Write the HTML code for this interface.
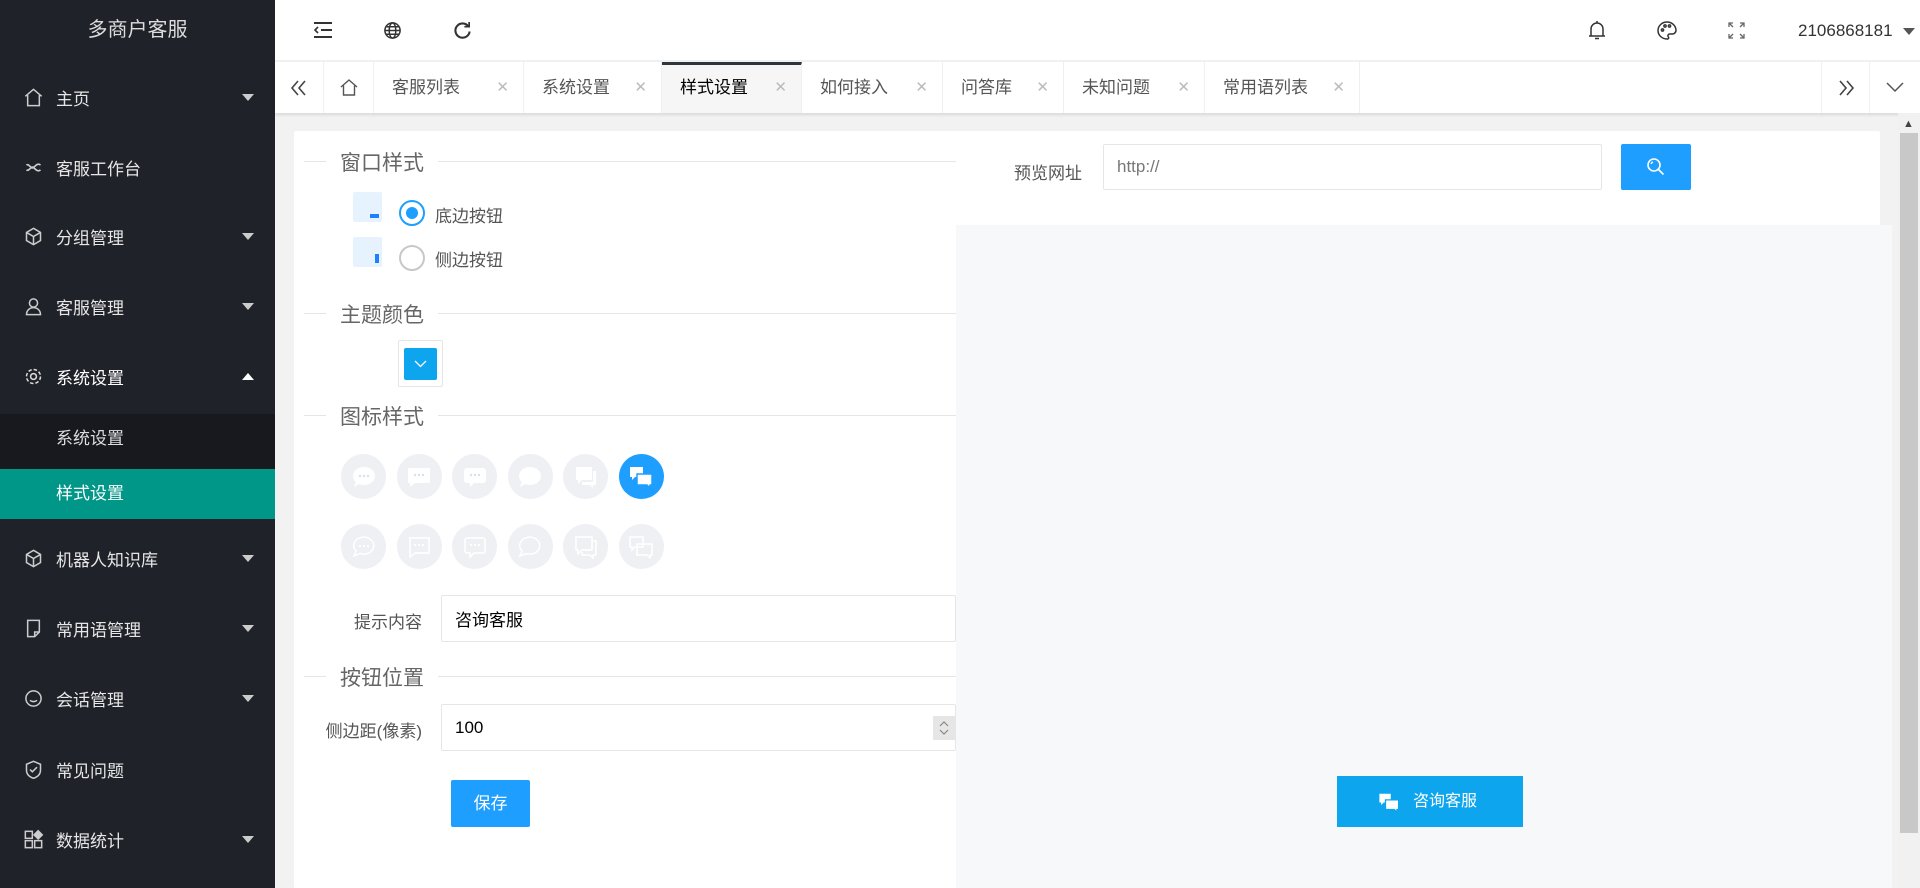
<!DOCTYPE html>
<html><head><meta charset="utf-8">
<style>
*{margin:0;padding:0;box-sizing:border-box}
body{width:1920px;height:888px;overflow:hidden;background:#f2f2f2;font-family:"Liberation Sans","Noto Sans CJK SC",sans-serif;position:relative}
.abs{position:absolute}
#side{left:0;top:0;width:275px;height:888px;background:#20222a}
.logo{left:0;top:0;width:275px;height:61px;line-height:61px;text-align:center;color:#ddd;font-size:20px}
.mi{left:0;width:275px;height:70px;color:#e6e6e6;font-size:17px;display:flex;align-items:center}
.mi svg{position:absolute;left:23px}
.mi span{position:absolute;left:56px}
.mi .ar{position:absolute;left:242px;width:0;height:0;border-left:6px solid transparent;border-right:6px solid transparent;border-top:7px solid #ccc}
.mi .up{border-top:none;border-bottom:7px solid #fff}
.sub{left:0;width:275px;height:50px;line-height:50px;padding-left:56px;color:#ddd;font-size:17px}
#hdr{left:275px;top:0;width:1645px;height:61px;background:#fff;border-bottom:1px solid #f0f0f0}
#tabs{left:275px;top:62px;width:1645px;height:51px;background:#fff;box-shadow:0 2px 3px rgba(0,0,0,.1)}
.tab{top:0;height:51px;border-right:1px solid #f0f0f0;font-size:17px;color:#555;line-height:51px;padding-left:18px}
.tab i{position:absolute;right:14px;top:0;font-style:normal;color:#bbb;font-size:15px}
.leg{font-size:21px;color:#666;background:#fff;padding:0 14px 0 14px}
.line{height:1px;background:#e6e6e6}
.ic{width:45px;height:45px;border-radius:50%;background:#eef0f4;display:flex;align-items:center;justify-content:center}
.inp{border:1px solid #e6e6e6;background:#fff;border-radius:2px;font-size:17px;color:#000;padding-left:13px;display:flex;align-items:center}
</style></head><body>
<div id="side" class="abs">
<div class="logo abs">多商户客服</div>
<div class="mi abs" style="top:62px"><svg width="21" height="21" viewBox="0 0 18 18" fill="none" stroke="#ccc" stroke-width="1.3"><path d="M2 8L9 2l7 6M4 7v9h10V7"/></svg><span>主页</span><b class="ar"></b></div>
<div class="mi abs" style="top:132px"><svg width="21" height="21" viewBox="0 0 18 18" fill="none" stroke="#ccc" stroke-width="1.4"><path d="M3 7c2-2 4 4 6 2s4-4 6-2M3 11c2 2 4-4 6-2s4 4 6 2"/></svg><span>客服工作台</span></div>
<div class="mi abs" style="top:201px"><svg width="21" height="21" viewBox="0 0 18 18" fill="none" stroke="#ccc" stroke-width="1.3"><path d="M9 2l6 3.5v7L9 16l-6-3.5v-7zM3 5.5L9 9l6-3.5M9 9v7"/></svg><span>分组管理</span><b class="ar"></b></div>
<div class="mi abs" style="top:271px"><svg width="21" height="21" viewBox="0 0 18 18" fill="none" stroke="#ccc" stroke-width="1.3"><circle cx="9" cy="6" r="3.5"/><path d="M3 16c0-4 3-6 6-6s6 2 6 6z"/></svg><span>客服管理</span><b class="ar"></b></div>
<div class="mi abs" style="top:341px;color:#fff"><svg width="21" height="21" viewBox="0 0 18 18" fill="none" stroke="#ddd" stroke-width="1.3"><circle cx="9" cy="9" r="2.5"/><circle cx="9" cy="9" r="6" stroke-dasharray="3 1.7"/></svg><span>系统设置</span><b class="ar up"></b></div>
<div class="abs" style="left:0;top:414px;width:275px;height:105px;background:#18191e"></div>
<div class="sub abs" style="top:414px">系统设置</div>
<div class="sub abs" style="top:469px;background:#009688;color:#fff">样式设置</div>
<div class="mi abs" style="top:523px"><svg width="21" height="21" viewBox="0 0 18 18" fill="none" stroke="#ccc" stroke-width="1.3"><path d="M9 2l6 3.5v7L9 16l-6-3.5v-7zM3 5.5L9 9l6-3.5M9 9v7"/></svg><span>机器人知识库</span><b class="ar"></b></div>
<div class="mi abs" style="top:593px"><svg width="21" height="21" viewBox="0 0 18 18" fill="none" stroke="#ccc" stroke-width="1.3"><path d="M4 2h10v10l-4 4H4zM10 16v-4h4"/></svg><span>常用语管理</span><b class="ar"></b></div>
<div class="mi abs" style="top:663px"><svg width="21" height="21" viewBox="0 0 18 18" fill="none" stroke="#ccc" stroke-width="1.3"><circle cx="9" cy="9" r="6.5"/><path d="M6 10.5c1.5 1.5 4.5 1.5 6 0"/></svg><span>会话管理</span><b class="ar"></b></div>
<div class="mi abs" style="top:734px"><svg width="21" height="21" viewBox="0 0 18 18" fill="none" stroke="#ccc" stroke-width="1.3"><path d="M9 2l6 2.5v5c0 4-3 6-6 7-3-1-6-3-6-7v-5zM6 9l2 2 4-4"/></svg><span>常见问题</span></div>
<div class="mi abs" style="top:804px"><svg width="21" height="21" viewBox="0 0 18 18" fill="none" stroke="#ccc" stroke-width="1.3"><rect x="2" y="2" width="6" height="6"/><rect x="2" y="10" width="6" height="6"/><rect x="10" y="10" width="6" height="6"/><path d="M13 1.5l3.5 3.5-3.5 3.5-3.5-3.5z" fill="#ccc"/></svg><span>数据统计</span><b class="ar"></b></div>
</div>

<div id="hdr" class="abs">
<svg class="abs" style="left:38px;top:21px" width="20" height="18" viewBox="0 0 20 18" fill="none" stroke="#333" stroke-width="2"><path d="M1 2h18M8 9h11M1 16h18"/><path d="M5 6l-3 3 3 3" stroke-width="1.6"/></svg>
<svg class="abs" style="left:108px;top:21px" width="19" height="19" viewBox="0 0 20 20" fill="none" stroke="#333" stroke-width="1.6"><circle cx="10" cy="10" r="8"/><ellipse cx="10" cy="10" rx="3.5" ry="8"/><path d="M2 10h16M3.5 6h13M3.5 14h13"/></svg>
<svg class="abs" style="left:178px;top:21px" width="19" height="19" viewBox="0 0 20 20" fill="none" stroke="#333" stroke-width="2.2"><path d="M16 5.5A7.5 7.5 0 1 0 17.5 11"/><path d="M17 1v5h-5" stroke-width="1.8"/></svg>
<svg class="abs" style="left:1313px;top:20px" width="18" height="21" viewBox="0 0 18 21" fill="none" stroke="#333" stroke-width="1.5"><path d="M3 16V9a6 6 0 0 1 12 0v7zM1 16h16M7 18.5h4M9 1v2"/></svg>
<svg class="abs" style="left:1382px;top:21px" width="20" height="19" viewBox="0 0 20 19" fill="none" stroke="#333" stroke-width="1.5"><path d="M10 1a9 8.5 0 0 0 0 17c2 0 2-1.5 1.2-2.5s0-2.5 1.6-2.5h2.5A3.7 3.7 0 0 0 19 9 9 8.5 0 0 0 10 1z"/><circle cx="5.5" cy="9" r="1.1"/><circle cx="8" cy="5" r="1.1"/><circle cx="12.5" cy="5" r="1.1"/></svg>
<svg class="abs" style="left:1453px;top:22px" width="17" height="17" viewBox="0 0 17 17" fill="none" stroke="#666" stroke-width="1.3"><path d="M1 5V1h4M1 1l4 4M16 5V1h-4M16 1l-4 4M1 12v4h4M1 16l4-4M16 12v4h-4M16 16l-4-4"/></svg>
<div class="abs" style="left:1523px;top:21px;font-size:17px;color:#333">2106868181</div>
<div class="abs" style="left:1628px;top:28px;border-left:6px solid transparent;border-right:6px solid transparent;border-top:7px solid #555"></div>
</div>

<div id="tabs" class="abs">
<div class="tab abs" style="left:0;width:49px;padding:0"><svg style="position:absolute;left:14px;top:16px" width="20" height="20" viewBox="0 0 20 20" fill="none" stroke="#444" stroke-width="1.6"><path d="M9 3L3 10l6 7M16 3l-6 7 6 7"/></svg></div>
<div class="tab abs" style="left:49px;width:50px;padding:0"><svg style="position:absolute;left:15px;top:16px" width="20" height="19" viewBox="0 0 20 19" fill="none" stroke="#555" stroke-width="1.4"><path d="M2 9L10 2l8 7M4.5 7.5V17h11V7.5"/></svg></div>
<div class="tab abs" style="left:99px;width:150px">客服列表<i>✕</i></div>
<div class="tab abs" style="left:249px;width:138px">系统设置<i>✕</i></div>
<div class="tab abs" style="left:387px;width:140px;background:#f6f6f6;color:#000;border-top:3px solid #2f363c;line-height:46px">样式设置<i style="line-height:46px">✕</i></div>
<div class="tab abs" style="left:527px;width:141px">如何接入<i>✕</i></div>
<div class="tab abs" style="left:668px;width:121px">问答库<i>✕</i></div>
<div class="tab abs" style="left:789px;width:141px">未知问题<i>✕</i></div>
<div class="tab abs" style="left:930px;width:155px">常用语列表<i>✕</i></div>
<div class="tab abs" style="left:1546px;width:49px;padding:0;border-left:1px solid #f0f0f0"><svg style="position:absolute;left:14px;top:16px" width="20" height="20" viewBox="0 0 20 20" fill="none" stroke="#444" stroke-width="1.6"><path d="M4 3l6 7-6 7M11 3l6 7-6 7"/></svg></div>
<div class="tab abs" style="left:1595px;width:50px;padding:0;border-right:none"><svg style="position:absolute;left:16px;top:18px" width="18" height="14" viewBox="0 0 18 14" fill="none" stroke="#555" stroke-width="1.5"><path d="M1 3l8 8 8-8"/></svg></div>
</div>

<div class="abs" style="left:294px;top:131px;width:1586px;height:757px;background:#fff;border-radius:2px"></div>
<div class="abs" style="left:956px;top:225px;width:936px;height:663px;background:#f7f8fa"></div>
<div class="abs" style="left:1898px;top:113px;width:22px;height:775px;background:#f1f1f1"></div>
<div class="abs" style="left:1903px;top:118px;font-size:11px;color:#444">▲</div>
<div class="abs" style="left:1900px;top:133px;width:18px;height:700px;background:#c8c8c8"></div>

<div class="abs" style="left:1014px;top:159px;font-size:17px;color:#555">预览网址</div>
<div class="inp abs" style="left:1103px;top:144px;width:499px;height:46px;color:#777">http://</div>
<div class="abs" style="left:1621px;top:144px;width:70px;height:46px;background:#1e9fff;border-radius:2px"><svg style="position:absolute;left:25px;top:13px" width="20" height="20" viewBox="0 0 20 20" fill="none" stroke="#fff" stroke-width="1.6"><circle cx="8" cy="8" r="6"/><path d="M12.5 12.5l5 5"/><path d="M5 7a3 3 0 0 1 2-2" stroke-width="1.2"/></svg></div>

<div class="abs line" style="left:304px;top:161px;width:652px"></div>
<div class="abs leg" style="left:326px;top:147px">窗口样式</div>
<div class="abs line" style="left:304px;top:313px;width:652px"></div>
<div class="abs leg" style="left:326px;top:299px">主题颜色</div>
<div class="abs line" style="left:304px;top:415px;width:652px"></div>
<div class="abs leg" style="left:326px;top:401px">图标样式</div>
<div class="abs line" style="left:304px;top:676px;width:652px"></div>
<div class="abs leg" style="left:326px;top:662px">按钮位置</div>

<div class="abs" style="left:353px;top:192px;width:29px;height:30px;background:#e6f3ff;border-radius:2px"><div class="abs" style="left:17px;top:22px;width:9px;height:4px;background:#1e7fff"></div></div>
<div class="abs" style="left:399px;top:200px;width:26px;height:26px;border:2px solid #1e9fff;border-radius:50%"><div class="abs" style="left:5px;top:5px;width:12px;height:12px;background:#1e9fff;border-radius:50%"></div></div>
<div class="abs" style="left:435px;top:202px;font-size:17px;color:#555">底边按钮</div>
<div class="abs" style="left:353px;top:237px;width:29px;height:30px;background:#e6f3ff;border-radius:2px"><div class="abs" style="left:22px;top:17px;width:4px;height:9px;background:#1e7fff"></div></div>
<div class="abs" style="left:399px;top:245px;width:26px;height:26px;border:2px solid #c8c8c8;border-radius:50%"></div>
<div class="abs" style="left:435px;top:246px;font-size:17px;color:#555">侧边按钮</div>

<div class="abs" style="left:398px;top:340px;width:45px;height:47px;border:1px solid #e6e6e6;border-radius:2px;background:#fff"><div class="abs" style="left:5px;top:7px;width:33px;height:32px;background:#0ea5ef;border-radius:2px"><svg style="position:absolute;left:10px;top:12px" width="13" height="8" viewBox="0 0 13 8" fill="none" stroke="#fff" stroke-width="1.3"><path d="M1 1l5.5 5.5L12 1"/></svg></div></div>

<div class="abs" style="left:341px;top:454px;display:flex;gap:10.6px">
<div class="ic"><svg width="26" height="24" viewBox="0 0 26 24"><ellipse cx="13" cy="11" rx="11" ry="9" fill="#fff"/><path d="M5 16l-2 6 7-4z" fill="#fff"/><g fill="#dde"><circle cx="9" cy="11" r="1.2"/><circle cx="13" cy="11" r="1.2"/><circle cx="17" cy="11" r="1.2"/></g></svg></div>
<div class="ic"><svg width="26" height="24" viewBox="0 0 26 24"><path d="M2 3h22v15H9l-5 4v-4H2z" fill="#fff"/><g fill="#dde"><circle cx="9" cy="10" r="1.2"/><circle cx="13" cy="10" r="1.2"/><circle cx="17" cy="10" r="1.2"/></g></svg></div>
<div class="ic"><svg width="26" height="24" viewBox="0 0 26 24"><rect x="2" y="3" width="22" height="15" rx="3" fill="#fff"/><path d="M8 17l0 5 5-5z" fill="#fff"/><g fill="#dde"><circle cx="9" cy="10" r="1.2"/><circle cx="13" cy="10" r="1.2"/><circle cx="17" cy="10" r="1.2"/></g></svg></div>
<div class="ic"><svg width="26" height="24" viewBox="0 0 26 24"><ellipse cx="13" cy="11" rx="11" ry="9" fill="#fff"/><path d="M5 16l-2 6 7-4z" fill="#fff"/></svg></div>
<div class="ic"><svg width="26" height="24" viewBox="0 0 26 24" fill="#fff"><path d="M3 2h16v13H9l-4 4v-4H3z"/><path d="M20 6h3v14h-3v3l-3-3H9v-3h11z"/></svg></div>
<div class="ic" style="background:#1e9fff"><svg width="26" height="24" viewBox="0 0 26 24" fill="#fff"><path d="M2 2h13v10H7l-3 3v-3H2z"/><path d="M9 9h15v11h-2v3l-3-3H9z" stroke="#1e9fff" stroke-width="1.5"/></svg></div>
</div>
<div class="abs" style="left:341px;top:524px;display:flex;gap:10.6px">
<div class="ic"><svg width="26" height="24" viewBox="0 0 26 24" fill="none" stroke="#fff" stroke-width="1.5"><path d="M5 16A10 8.5 0 1 1 9 18.5L3 21z"/><g fill="#fff" stroke="none"><circle cx="9" cy="11" r="1.1"/><circle cx="13" cy="11" r="1.1"/><circle cx="17" cy="11" r="1.1"/></g></svg></div>
<div class="ic"><svg width="26" height="24" viewBox="0 0 26 24" fill="none" stroke="#fff" stroke-width="1.5"><path d="M3 3h20v15H9l-5 4V3z"/><g fill="#fff" stroke="none"><circle cx="9" cy="10" r="1.1"/><circle cx="13" cy="10" r="1.1"/><circle cx="17" cy="10" r="1.1"/></g></svg></div>
<div class="ic"><svg width="26" height="24" viewBox="0 0 26 24" fill="none" stroke="#fff" stroke-width="1.5"><path d="M5 3h16a2 2 0 0 1 2 2v11a2 2 0 0 1-2 2H12l-4 4v-4H5a2 2 0 0 1-2-2V5a2 2 0 0 1 2-2z"/><g fill="#fff" stroke="none"><circle cx="9" cy="10" r="1.1"/><circle cx="13" cy="10" r="1.1"/><circle cx="17" cy="10" r="1.1"/></g></svg></div>
<div class="ic"><svg width="26" height="24" viewBox="0 0 26 24" fill="none" stroke="#fff" stroke-width="1.5"><path d="M5 16A10 8.5 0 1 1 9 18.5L3 21z"/></svg></div>
<div class="ic"><svg width="26" height="24" viewBox="0 0 26 24" fill="none" stroke="#fff" stroke-width="1.5"><path d="M3 2h16v13H9l-4 4v-4H3z"/><path d="M20 6h3v14h-3v3l-3-3H9v-3"/></svg></div>
<div class="ic"><svg width="26" height="24" viewBox="0 0 26 24" fill="none" stroke="#fff" stroke-width="1.5"><path d="M2 2h13v10H7l-3 3v-3H2z"/><path d="M9 9h15v11h-2v3l-3-3H9z"/></svg></div>
</div>

<div class="abs" style="left:330px;top:608px;width:92px;text-align:right;font-size:17px;color:#555">提示内容</div>
<div class="inp abs" style="left:441px;top:595px;width:515px;height:47px">咨询客服</div>
<div class="abs" style="left:300px;top:717px;width:122px;text-align:right;font-size:17px;color:#555">侧边距(像素)</div>
<div class="inp abs" style="left:441px;top:704px;width:515px;height:47px">100</div>
<div class="abs" style="left:933px;top:716px;width:22px;height:24px;background:#e6e6e6"><svg style="position:absolute;left:6px;top:4px" width="10" height="16" viewBox="0 0 10 16" fill="none" stroke="#888" stroke-width="1.2"><path d="M1 6l4-4 4 4M1 10l4 4 4-4"/></svg></div>

<div class="abs" style="left:451px;top:780px;width:79px;height:47px;background:#1e9fff;border-radius:2px;color:#fff;font-size:17px;line-height:47px;text-align:center">保存</div>

<div class="abs" style="left:1337px;top:776px;width:186px;height:51px;background:#0ea5ef;color:#fff;font-size:16px;line-height:51px"><svg style="position:absolute;left:40px;top:16px" width="24" height="21" viewBox="0 0 26 24" fill="#fff"><path d="M2 2h13v10H7l-3 3v-3H2z"/><path d="M9 9h15v11h-2v3l-3-3H9z" stroke="#0ea5ef" stroke-width="1.5"/></svg><span style="position:absolute;left:76px">咨询客服</span></div>
</body></html>
